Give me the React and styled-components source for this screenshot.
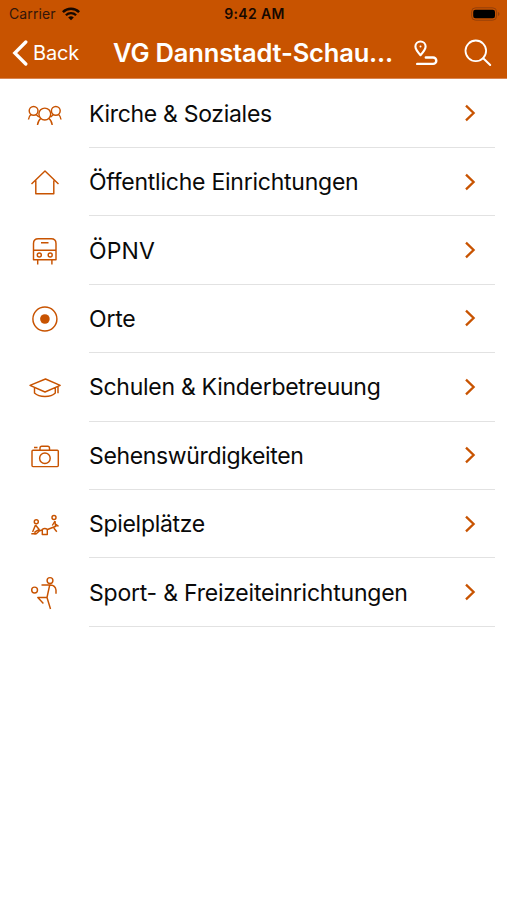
import React from "react";
import styled, { createGlobalStyle } from "styled-components";

const orange = "#c85300";

const GlobalStyle = createGlobalStyle`
  * {
    box-sizing: border-box;
  }
  body {
    margin: 0;
    background: #fff;
    font-family: Inter, "Liberation Sans", sans-serif;
  }
`;

const Screen = styled.div`
  width: 507px;
  height: 900px;
  overflow: hidden;
  background: #fff;
`;

const Header = styled.header`
  height: 79px;
  background: ${orange};
  border-bottom: 1px solid #d98450;
`;

const StatusBar = styled.div`
  display: grid;
  grid-template-columns: 1fr auto 1fr;
  align-items: center;
  height: 27px;
  padding: 0 7px 0 9px;
  color: #160800;
`;

const Carrier = styled.div`
  display: flex;
  align-items: center;
  gap: 6px;
  font-size: 14px;
  letter-spacing: 0.12px;
  color: #32160a;
`;

const Clock = styled.div`
  font-size: 14px;
  font-weight: 600;
  letter-spacing: 0.35px;
`;

const Battery = styled.div`
  display: flex;
  justify-content: flex-end;
`;

const NavBar = styled.nav`
  display: flex;
  align-items: center;
  height: 51px;
  padding-left: 12px;
  color: #fff;
`;

const BackButton = styled.div`
  display: flex;
  align-items: center;
  gap: 5px;
  width: 101px;
  font-size: 20px;
  letter-spacing: -0.2px;
`;

const Title = styled.h1`
  width: 300px;
  margin: 0;
  font-size: 25.5px;
  font-weight: 600;
  letter-spacing: -0.17px;
  white-space: nowrap;
`;

const Actions = styled.div`
  display: flex;
  align-items: center;
  gap: 26px;
`;

const List = styled.ul`
  margin: 0;
  padding: 0.6px 0 0;
  list-style: none;
`;

const Row = styled.li`
  display: flex;
  align-items: center;
  height: 68.4px;
  padding: 0 12px 0 20px;
`;

const IconCell = styled.div`
  display: flex;
  width: 69px;
  color: ${orange};
`;

const RowBody = styled.div`
  display: flex;
  flex: 1;
  align-items: center;
  justify-content: space-between;
  height: 100%;
  padding-right: 19px;
  border-bottom: 1px solid #e2e2e2;
`;

const Label = styled.span`
  padding-top: 1px;
  font-size: 23px;
  letter-spacing: ${(props) => props.$spacing}px;
  white-space: nowrap;
  color: #0a0a0a;
`;

const icons = {
  people: (
    <>
      <circle cx="24.8" cy="23" r="5.9" />
      <circle cx="13.6" cy="19.8" r="4.4" />
      <circle cx="35.8" cy="19.8" r="4.4" />
      <path d="M17.500 34c.3-3 1.300-5 3.300-6.500M32.200 34c-.3-3-1.300-5-3.300-6.500M8.500 28.500c.3-2.300 1-3.800 2.500-5M18.800 26l-3-2.700M41 28.500c-.3-2.300-1-3.800-2.500-5M30.700 26l3-2.700" />
    </>
  ),
  house: <path d="M11.500 25 25 12l13.500 13M15.800 21.500v13.200h18V21.500" />,
  bus: (
    <>
      <path d="M13.500 31.800V15.500q0-4.800 4.800-4.800h12.900q4.800 0 4.800 4.800v16.300zM13.500 22.300H36M21 14.700h7.500M17.700 32v4.600M31.900 32v4.600" />
      <circle cx="19.300" cy="27" r="2" />
      <circle cx="30.200" cy="27" r="2" />
    </>
  ),
  target: (
    <>
      <circle cx="24.900" cy="23" r="12" />
      <circle cx="24.900" cy="23" r="4.800" fill="currentColor" stroke="none" />
    </>
  ),
  cap: (
    <path d="M10 21.300 25.500 15l14.700 6.300L25 28zM14.500 23.500v5.600q3.500 3.400 10.500 3.400t10.300-3.400v-5M38 22.500v6.700" />
  ),
  camera: (
    <>
      <rect x="12" y="17.200" width="26.300" height="16.400" rx="1" />
      <path d="M20 17v-2q0-1.800 1.800-1.800h5.900q1.800 0 1.800 1.800v2M14 14.500h3.500" />
      <circle cx="24.900" cy="25.200" r="5.300" />
    </>
  ),
  playground: (
    <>
      <circle cx="16.300" cy="20.700" r="2" />
      <circle cx="34" cy="16.400" r="2" />
      <path d="M15.500 24 12.600 31M15.500 24l3.700 4.500-4.200 2.300v3M11.300 32.800h5l3-2.800M19 30l3-1M27.500 28.500l9-3.500M35 20l.500 5.300M35 20l-2.700 4.500M35.500 23l3 2.300M33.800 27l3 3.800M22.300 28.300q2.500-1.500 5 0v5.200h-5z" />
    </>
  ),
  ball: (
    <>
      <circle cx="30" cy="10.500" r="2.900" />
      <circle cx="14.600" cy="20" r="2.900" />
      <path d="M21.500 15h8.800q5 .3 5.700 5v3.800M29.700 15l-2.700 12.500H17.800l5.600 5.900M27 27.500l3.500 11.500" />
    </>
  ),
};

const rows = [
  { label: "Kirche & Soziales", icon: "people", spacing: -0.31 },
  { label: "Öffentliche Einrichtungen", icon: "house", spacing: -0.24 },
  { label: "ÖPNV", icon: "bus", spacing: 0.1 },
  { label: "Orte", icon: "target", spacing: -0.2 },
  { label: "Schulen & Kinderbetreuung", icon: "cap", spacing: -0.28 },
  { label: "Sehenswürdigkeiten", icon: "camera", spacing: -0.35 },
  { label: "Spielplätze", icon: "playground", spacing: -0.3 },
  { label: "Sport- & Freizeiteinrichtungen", icon: "ball", spacing: -0.23 },
];

const CategoryIcon = ({ name }) => (
  <svg
    width="60"
    height="54"
    viewBox="0 -4 60 54"
    fill="none"
    stroke="currentColor"
    strokeWidth="1.45"
    strokeLinejoin="round"
  >
    {icons[name]}
  </svg>
);

const WifiIcon = () => (
  <svg width="18" height="14" viewBox="0 0 18 14" fill="none" stroke="#160800">
    <path d="M.9 5.100a11.500 11.500 0 0 1 16.200 0" strokeWidth="2.500" />
    <path d="M3.900 8.300a7.200 7.200 0 0 1 10.200 0" strokeWidth="2.300" />
    <path d="M9 13.300 6.200 10.500a4 4 0 0 1 5.600 0z" fill="#160800" stroke="none" />
  </svg>
);

const BatteryIcon = () => (
  <svg width="29" height="14" viewBox="0 0 29 14">
    <rect x=".6" y=".8" width="25" height="12.400" rx="4" fill="none" stroke="#94400a" />
    <rect x="2.200" y="2.700" width="21.800" height="8.600" rx="2.300" fill="#000" />
    <path d="M27 5v4q1.500-.6 1.500-2t-1.500-2" fill="#94400a" />
  </svg>
);

const BackIcon = () => (
  <svg width="16" height="26" viewBox="0 0 16 26" fill="none" stroke="#fff">
    <path d="M13.800 2 2.800 13l11 11" strokeWidth="3.300" strokeLinecap="round" />
  </svg>
);

const RouteIcon = () => (
  <svg width="25" height="26" viewBox="0 0 25 26" fill="none" stroke="#fff">
    <path
      d="M7.500 15.200C4.500 12 2.400 9.400 2.400 6.600a5.100 5.100 0 0 1 10.200 0c0 2.800-2.100 5.400-5.100 8.600z"
      strokeWidth="2.100"
      strokeLinejoin="round"
    />
    <circle cx="7.500" cy="6.500" r="1" fill="#fff" stroke="none" />
    <path
      d="M12.800 17.500h7.300a3.200 3.200 0 0 1 0 6.400H4.200"
      strokeWidth="2.400"
      strokeLinecap="round"
    />
  </svg>
);

const SearchIcon = () => (
  <svg width="28" height="28" viewBox="0 0 28 28" fill="none" stroke="#fff">
    <circle cx="11.800" cy="11.800" r="10.300" strokeWidth="1.800" />
    <path d="m19.200 19.200 7 6.800" strokeWidth="2" strokeLinecap="round" />
  </svg>
);

const Chevron = () => (
  <svg width="12" height="18" viewBox="0 0 12 18" fill="none" stroke={orange}>
    <path d="m2 1.700 7.600 7.300L2 16.300" strokeWidth="2.300" />
  </svg>
);

export default function App() {
  return (
    <Screen>
      <GlobalStyle />
      <Header>
        <StatusBar>
          <Carrier>
            Carrier
            <WifiIcon />
          </Carrier>
          <Clock>9:42 AM</Clock>
          <Battery>
            <BatteryIcon />
          </Battery>
        </StatusBar>
        <NavBar>
          <BackButton>
            <BackIcon />
            Back
          </BackButton>
          <Title>VG Dannstadt-Schau...</Title>
          <Actions>
            <RouteIcon />
            <SearchIcon />
          </Actions>
        </NavBar>
      </Header>
      <List>
        {rows.map((row) => (
          <Row key={row.label}>
            <IconCell>
              <CategoryIcon name={row.icon} />
            </IconCell>
            <RowBody>
              <Label $spacing={row.spacing}>{row.label}</Label>
              <Chevron />
            </RowBody>
          </Row>
        ))}
      </List>
    </Screen>
  );
}
